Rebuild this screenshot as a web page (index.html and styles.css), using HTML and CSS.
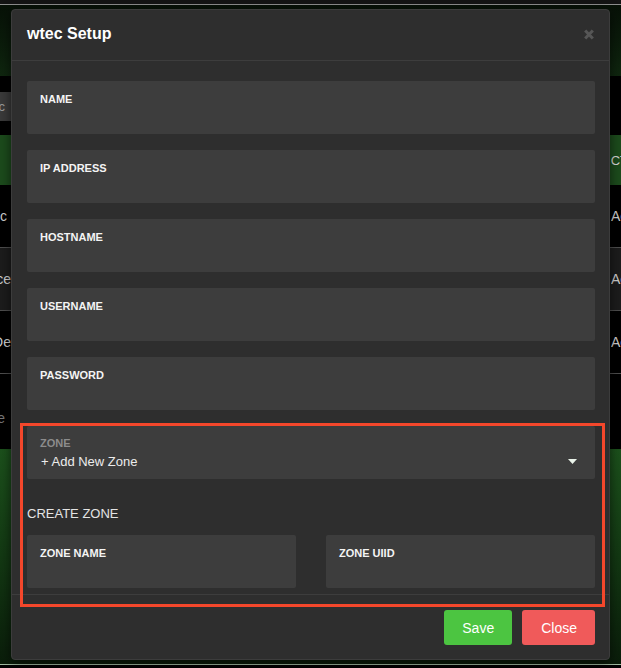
FILE: index.html
```html
<!DOCTYPE html>
<html lang="en">
<head>
<meta charset="utf-8">
<title>wtec Setup</title>
<link rel="stylesheet" href="styles.css">
</head>
<body>
<div class="page">
  <div class="topline"></div>
  <div class="hero"></div>
  <div class="toolbar">
    <div class="search"><span>wtec</span></div>
  </div>
  <div class="table">
    <div class="thead">
      <div class="cell-l"></div>
      <div class="spacer"></div>
      <div class="cell-r"><span class="shift">ACTIONS</span></div>
    </div>
    <div class="row">
      <div class="cell-l pad4">wtec</div>
      <div class="spacer"></div>
      <div class="cell-r">Active</div>
    </div>
    <div class="row row-alt">
      <div class="cell-l">Office</div>
      <div class="spacer"></div>
      <div class="cell-r">Active</div>
    </div>
    <div class="row">
      <div class="cell-l">Door De</div>
      <div class="spacer"></div>
      <div class="cell-r">Active</div>
    </div>
    <div class="row row-last">
      <div class="cell-l pad6 muted">None</div>
      <div class="spacer"></div>
      <div class="cell-r"></div>
    </div>
  </div>
  <div class="bottom"></div>
</div>

<div class="modal">
  <div class="modal-header">
    <h4 class="modal-title">wtec Setup</h4>
    <svg class="close-x" width="10" height="11" viewBox="0 0 10 11"><path d="M1.2 1.5 L8.8 9.5 M8.8 1.5 L1.2 9.5" stroke="#565656" stroke-width="3"/></svg>
  </div>
  <div class="modal-body">
    <div class="field"><div class="label">NAME</div></div>
    <div class="field"><div class="label">IP ADDRESS</div></div>
    <div class="field"><div class="label">HOSTNAME</div></div>
    <div class="field"><div class="label">USERNAME</div></div>
    <div class="field"><div class="label">PASSWORD</div></div>
    <div class="field field-select">
      <div class="label label-muted">ZONE</div>
      <div class="select-row">
        <span class="select-value">+ Add New Zone</span>
        <svg class="caret" width="9" height="5" viewBox="0 0 9 5"><path d="M0 0H9L4.5 5Z" fill="#eaf3ea"/></svg>
      </div>
    </div>
    <div class="section-title">CREATE ZONE</div>
    <div class="zone-grid">
      <div class="field field-last"><div class="label">ZONE NAME</div></div>
      <div class="field field-last"><div class="label">ZONE UIID</div></div>
    </div>
  </div>
  <div class="modal-footer">
    <button class="btn btn-save">Save</button>
    <button class="btn btn-close">Close</button>
  </div>
</div>

<div class="highlight"></div>
</body>
</html>
```
FILE: styles.css
```css
* { box-sizing: border-box; }

html, body {
  margin: 0;
  padding: 0;
  width: 621px;
  height: 668px;
  overflow: hidden;
  background: #000;
  font-family: "Liberation Sans", Arial, sans-serif;
}

/* ---------- background page ---------- */
.page {
  width: 621px;
  height: 668px;
  display: flex;
  flex-direction: column;
}

.topline {
  height: 5px;
  background: #141414;
  border-bottom: 1px solid #8e8e8e;
  flex: none;
}

.hero {
  height: 71px;
  flex: none;
  background: linear-gradient(180deg, #071107 0%, #0c1f0c 70%, #0f260f 100%);
}

.toolbar {
  height: 59px;
  flex: none;
  background: #000;
  padding-top: 16px;
}

.search {
  width: 11px;
  height: 29px;
  background: #3a3a3a;
  display: flex;
  justify-content: flex-end;
  align-items: center;
  padding-right: 6px;
  overflow: hidden;
  white-space: nowrap;
  color: #9a9a9a;
  font-size: 13px;
}

.table {
  flex: none;
  display: flex;
  flex-direction: column;
}

.thead {
  height: 50px;
  background: #1c4b1c;
  display: flex;
  align-items: center;
  color: #d8d8d8;
  font-size: 13px;
}

.row {
  height: 63px;
  display: flex;
  align-items: center;
  background: #000;
  border-bottom: 1px solid #4e4e4e;
  color: #cfcfcf;
  font-size: 14px;
}

.row-alt { background: #1c1c1c; }

.row-last {
  height: 75px;
  border-bottom: none;
  padding-top: 12px;
}

.cell-l {
  width: 11px;
  flex: none;
  display: flex;
  justify-content: flex-end;
  overflow: hidden;
  white-space: nowrap;
}

.pad4 { padding-right: 4px; }
.pad6 { padding-right: 6px; }
.muted { color: #777; }

.spacer { flex: 1; }

.cell-r {
  width: 10px;
  flex: none;
  overflow: hidden;
  white-space: nowrap;
}

.shift {
  display: inline-block;
  margin-left: -9px;
}

.bottom {
  flex: 1;
  background: linear-gradient(180deg, #1c511c 0%, #123612 55%, #0a1d0a 100%);
  border-bottom: 1px solid #a3bda3;
  margin-bottom: 3px;
}

/* ---------- modal ---------- */
.modal {
  position: absolute;
  left: 11px;
  top: 9px;
  width: 599px;
  background: #2e2e2e;
  border: 1px solid #3c3c3c;
  border-radius: 4px;
  box-shadow: 0 3px 12px rgba(0, 0, 0, 0.6);
}

.modal-header {
  height: 51px;
  padding: 0 15px 2px 15px;
  border-bottom: 1px solid #3d3d3d;
  display: flex;
  align-items: center;
  justify-content: space-between;
}

.modal-title {
  margin: 0;
  font-size: 16px;
  line-height: 18px;
  font-weight: bold;
  color: #fff;
}

.close-x { display: block; }

.modal-body {
  padding: 20px 14px 6px 15px;
}

.field {
  height: 53px;
  background: #3d3d3d;
  border-radius: 2px;
  padding: 12px 13px 0;
  margin-bottom: 16px;
}

.field-last { margin-bottom: 0; }

.label {
  font-size: 11px;
  line-height: 13px;
  font-weight: bold;
  color: #f4f4f4;
}

.field-select {
  padding-top: 11px;
  padding-right: 18px;
  margin-bottom: 0;
}

.label-muted { color: #8c8c8c; }

.select-row {
  margin-top: 2px;
  height: 20px;
  display: flex;
  align-items: center;
  justify-content: space-between;
}

.select-value {
  font-size: 13px;
  line-height: 20px;
  color: #ececec;
  padding-left: 1px;
}

.caret { display: block; margin-top: -2px; }

.section-title {
  margin: 26px 0 12px;
  font-size: 13px;
  line-height: 18px;
  color: #e4e4e4;
}

.zone-grid {
  display: grid;
  grid-template-columns: 1fr 1fr;
  column-gap: 30px;
}

.modal-footer {
  border-top: 1px solid #3d3d3d;
  padding: 15px 14px 14px;
  display: flex;
  justify-content: flex-end;
  gap: 10px;
}

.btn {
  height: 35px;
  padding: 0 18px;
  border: none;
  border-radius: 3px;
  font-family: "Liberation Sans", Arial, sans-serif;
  font-size: 14px;
  color: #fff;
}

.btn-save { background: #4cc541; }
.btn-close { background: #f05a5a; padding: 0 18px 0 19px; }

/* annotation overlay */
.highlight {
  position: absolute;
  left: 20px;
  top: 423px;
  width: 585px;
  height: 184px;
  border: 3px solid #f4472b;
}
```
